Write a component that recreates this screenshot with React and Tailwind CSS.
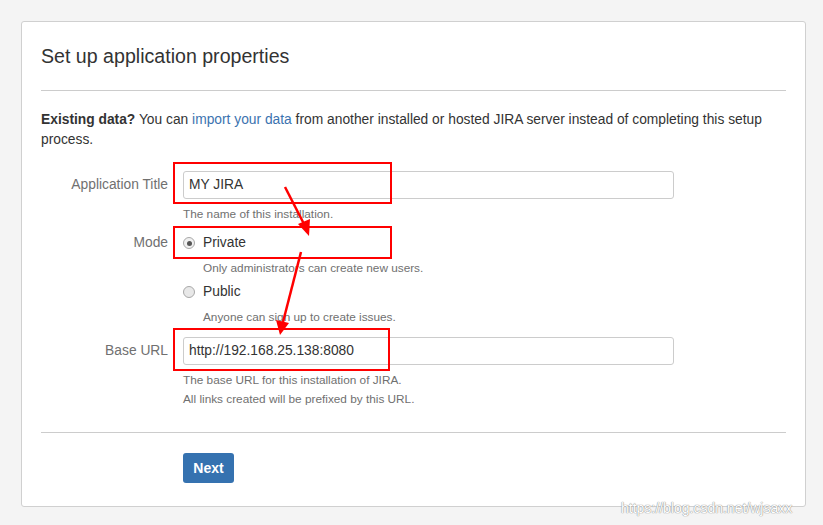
export default function App() {
  return (
    <div className="relative min-h-[525px] w-[823px] bg-[#f4f4f4] pt-[21px] pl-[21px] font-['Liberation_Sans',Arial,sans-serif] text-[#333]">
      <div className="w-[785px] h-[486px] bg-white border border-[#d0d0d0] rounded-[3px] px-[19px] pt-[19px]">
        <h1 className="text-[19.6px] leading-[30px] text-[#333]">Set up application properties</h1>
        <div className="mt-[19px] border-t border-[#cccccc]" />
        <p className="mt-[19px] text-[13.8px] leading-[20px]">
          <span className="font-bold">Existing data?</span> You can <span className="text-[#3b73af]">import your data</span> from another installed or hosted JIRA server instead of completing this setup process.
        </p>

        <div className="mt-[21px] grid grid-cols-[127px_1fr] gap-x-[15px] text-[13.8px]">
          <div className="h-[28px] flex items-center justify-end text-[#707070]">Application Title</div>
          <div>
            <div className="w-[491px] h-[28px] border border-[#cccccc] rounded-[3px] flex items-center px-[5px]">MY JIRA</div>
            <div className="mt-[6px] text-[11.8px] leading-[18px] text-[#707070]">The name of this installation.</div>
          </div>

          <div className="mt-[10px] h-[20px] flex items-center justify-end text-[#707070]">Mode</div>
          <div className="mt-[10px]">
            <div className="h-[20px] flex items-center">
              <span className="w-[12px] h-[12px] rounded-full border border-[#a8a8a8] bg-[#f0f0f0] flex items-center justify-center">
                <span className="w-[5px] h-[5px] rounded-full bg-[#555]" />
              </span>
              <span className="ml-[8px]">Private</span>
            </div>
            <div className="mt-[6px] pl-[20px] text-[11.8px] leading-[18px] text-[#707070]">Only administrators can create new users.</div>
            <div className="mt-[5px] h-[20px] flex items-center">
              <span className="w-[12px] h-[12px] rounded-full border border-[#a8a8a8] bg-[#e8e8e8]" />
              <span className="ml-[8px]">Public</span>
            </div>
            <div className="mt-[6px] pl-[20px] text-[11.8px] leading-[18px] text-[#707070]">Anyone can sign up to create issues.</div>
          </div>

          <div className="mt-[11px] h-[28px] flex items-center justify-end text-[#707070]">Base URL</div>
          <div className="mt-[11px]">
            <div className="w-[491px] h-[28px] border border-[#cccccc] rounded-[3px] flex items-center px-[5px]">http://192.168.25.138:8080</div>
            <div className="mt-[6px] text-[11.8px] leading-[18px] text-[#707070]">The base URL for this installation of JIRA.</div>
            <div className="mt-[1px] text-[11.8px] leading-[18px] text-[#707070]">All links created will be prefixed by this URL.</div>
          </div>
        </div>

        <div className="mt-[24px] border-t border-[#cccccc]" />
        <div className="mt-[20px] pl-[142px]">
          <button className="w-[51px] h-[30px] rounded-[3px] bg-[#3572b0] text-white font-bold text-[14px]">Next</button>
        </div>
      </div>

      <div className="absolute left-[173px] top-[162px] w-[219px] h-[42px] border-2 border-[#ff0000]" />
      <div className="absolute left-[173px] top-[226px] w-[219px] h-[33px] border-2 border-[#ff0000]" />
      <div className="absolute left-[173px] top-[328px] w-[217px] h-[43px] border-2 border-[#ff0000]" />

      <svg className="absolute left-0 top-0 pointer-events-none" width="823" height="525">
        <line x1="285" y1="187" x2="304" y2="224" stroke="#ff0000" strokeWidth="2.5" />
        <polygon points="309,236 298,224 310,219" fill="#ff0000" />
        <line x1="301" y1="252" x2="283" y2="322" stroke="#ff0000" strokeWidth="2.5" />
        <polygon points="280,335 276,320 289,323" fill="#ff0000" />
      </svg>

      <div className="absolute left-[621px] top-[498px] text-[14px] text-white [text-shadow:0_0_1px_#888,0_0_1px_#888]">https://blog.csdn.net/wjsaxx</div>
    </div>
  );
}
